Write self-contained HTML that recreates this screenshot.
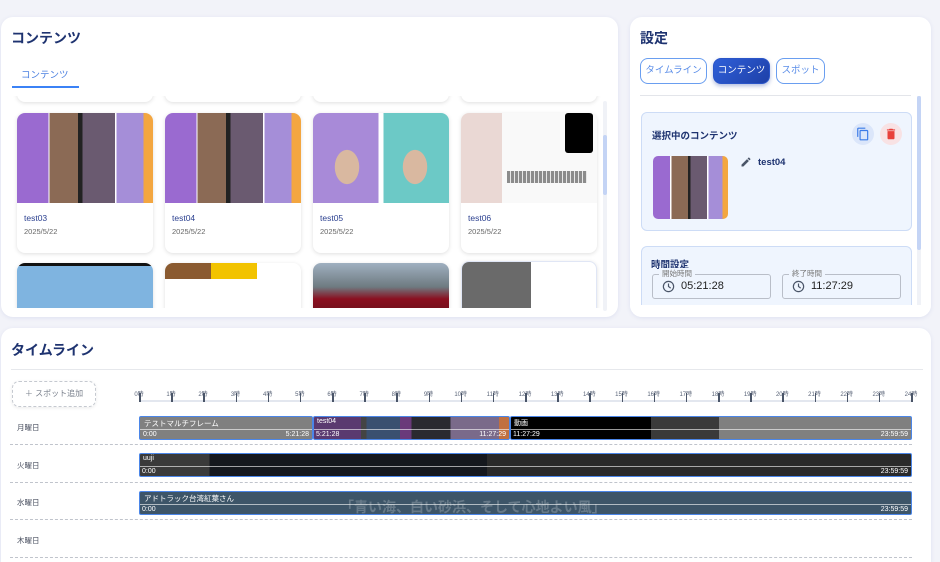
<!DOCTYPE html>
<html style="width:940px;height:562px;overflow:hidden"><head><meta charset="utf-8"><style>
*{margin:0;padding:0;box-sizing:border-box}
body{width:940px;height:562px;overflow:hidden;background:#f2f3f9;font-family:"Liberation Sans","Noto Sans CJK JP",sans-serif;position:relative}
.a{position:absolute}
.card{background:#fff;border-radius:12px;box-shadow:0 1px 4px rgba(80,100,180,.12)}
.h{color:#1e3370;font-weight:bold;font-size:14px}
.cc{position:absolute;width:136px;background:#fff;border-radius:8px;box-shadow:0 1px 4px rgba(0,0,0,.13);overflow:hidden}
.cc .img{position:absolute;left:0;top:0;width:136px;height:90px}
.cc .t{position:absolute;left:7px;top:100px;font-size:8.5px;color:#2a3f8f}
.cc .d{position:absolute;left:7px;top:114px;font-size:7.5px;color:#666}
.tab{position:absolute;top:41px;height:26px;border:1.5px solid #6a9ef0;border-radius:8px;color:#5a8de8;font-size:9.5px;line-height:23px;text-align:center}
.tk{position:absolute;top:389px;font-size:6px;color:#5a6478;width:20px;margin-left:-10px;text-align:center}
.tkl{position:absolute;top:393px;width:1.5px;height:9px;background:#4a5568}
.day{position:absolute;left:17px;font-size:7.5px;color:#4a5060}
.sep{position:absolute;left:10px;width:902px;border-top:1px dashed #c0c4cc}
.bar{position:absolute;left:139px;width:773px;height:24px;border:1px solid #4b86e8;border-radius:2px;overflow:hidden}
.lb{position:absolute;font-size:7px;color:#fff;white-space:nowrap}
.ml{position:absolute;left:0;right:0;top:12px;height:1px;background:rgba(255,255,255,.6)}
.inp{position:absolute;top:274px;width:119px;height:25px;border:1px solid #b9bec8;border-radius:3px;font-size:11px;color:#222}
.inp span.lg{position:absolute;top:-7px;left:6px;background:#eff5fe;padding:0 3px;font-size:7.5px;color:#777}
</style></head><body>

<!-- Contents card -->
<div class="a card" style="left:1px;top:17px;width:617px;height:300px;overflow:hidden">
 <div class="a h" style="left:10px;top:11px">コンテンツ</div>
 <div class="a" style="left:20px;top:50px;font-size:9.5px;color:#4a7fe0">コンテンツ</div>
 <div class="a" style="left:11px;top:69px;width:67px;height:2px;background:#3b82f6"></div>
 <div class="a" style="left:0;top:79px;width:617px;height:212px;overflow:hidden">
  <div class="cc" style="left:16px;top:-10px;height:16px"></div>
  <div class="cc" style="left:164px;top:-10px;height:16px"></div>
  <div class="cc" style="left:312px;top:-10px;height:16px"></div>
  <div class="cc" style="left:460px;top:-10px;height:16px"></div>
  <div class="cc" style="left:16px;top:17px;height:140px">
   <div class="img" style="background:linear-gradient(90deg,#9a6ad0 0 23%,#fff 23% 24%,#8b6a55 24% 45%,#222 45% 48%,#6a5a70 48% 72%,#fff 72% 73%,#a58ed8 73% 93%,#f3a640 93%)"></div>
   <div class="t">test03</div><div class="d">2025/5/22</div></div>
  <div class="cc" style="left:164px;top:17px;height:140px">
   <div class="img" style="background:linear-gradient(90deg,#9a6ad0 0 23%,#fff 23% 24%,#8b6a55 24% 45%,#222 45% 48%,#6a5a70 48% 72%,#fff 72% 73%,#a58ed8 73% 93%,#f3a640 93%)"></div>
   <div class="t">test04</div><div class="d">2025/5/22</div></div>
  <div class="cc" style="left:312px;top:17px;height:140px">
   <div class="img" style="background:radial-gradient(ellipse 20px 28px at 25% 60%,#d9b8a0 60%,transparent 62%),radial-gradient(ellipse 20px 28px at 75% 60%,#d9b8a0 60%,transparent 62%),linear-gradient(90deg,#a88ad8 0 48%,#fff 48% 52%,#6cc9c6 52%)"></div>
   <div class="t">test05</div><div class="d">2025/5/22</div></div>
  <div class="cc" style="left:460px;top:17px;height:140px">
   <div class="img" style="background:linear-gradient(90deg,#ead8d4 0 30%,#f9f9f9 30%)"></div>
   <div class="a" style="left:104px;top:0;width:28px;height:40px;background:#000;border-radius:3px"></div>
   <div class="a" style="left:46px;top:58px;width:80px;height:12px;background:repeating-linear-gradient(90deg,#444 0 3px,#ddd 3px 4px);opacity:.6"></div>
   <div class="t">test06</div><div class="d">2025/5/22</div></div>
  <div class="cc" style="left:16px;top:167px;height:60px;background:linear-gradient(#111 0 3px,#7fb4e0 3px)"></div>
  <div class="cc" style="left:164px;top:167px;height:60px"><div class="a" style="left:0;top:0;width:46px;height:16px;background:#8a5a30"></div><div class="a" style="left:46px;top:0;width:46px;height:16px;background:#f2c300"></div></div>
  <div class="cc" style="left:312px;top:167px;height:60px;background:linear-gradient(#9fb0c0,#6e7a80 40%,#8a1020 60%,#5a1018)"></div>
  <div class="cc" style="left:460px;top:165px;height:60px;border:1px solid #e0e6f5"><div class="a" style="left:0;top:0;width:69px;height:60px;background:#6a6a6a"></div></div>
 </div>
 <div class="a" style="left:602px;top:84px;width:4px;height:210px;background:#f0f2f7;border-radius:2px"></div>
 <div class="a" style="left:602px;top:118px;width:4px;height:60px;background:#c4d4f5;border-radius:2px"></div>
</div>

<!-- Settings card -->
<div class="a card" style="left:630px;top:17px;width:301px;height:300px;overflow:hidden">
 <div class="a h" style="left:10px;top:11px">設定</div>
 <div class="tab" style="left:10px;width:67px">タイムライン</div>
 <div class="tab" style="left:83px;width:57px;background:linear-gradient(135deg,#2f5fd8,#1e40a8);border-color:#2a55c8;color:#fff;box-shadow:0 2px 4px rgba(30,60,160,.35)">コンテンツ</div>
 <div class="tab" style="left:146px;width:49px">スポット</div>
 <div class="a" style="left:10px;top:78px;width:271px;height:1px;background:#e3e5ea"></div>
 <div class="a" style="left:287px;top:79px;width:4px;height:210px;background:#f0f2f7"></div>
 <div class="a" style="left:287px;top:79px;width:4px;height:154px;background:#c4d4f5;border-radius:2px"></div>
 <div class="a" style="left:11px;top:95px;width:271px;height:119px;background:#eff5fe;border:1px solid #cddcf6;border-radius:6px">
  <div class="a" style="left:10px;top:15px;font-size:9.5px;font-weight:bold;color:#1e3370">選択中のコンテンツ</div>
  <div class="a" style="left:210px;top:10px;width:22px;height:22px;border-radius:50%;background:#dbe6fa"></div>
  <svg class="a" style="left:214px;top:14px" width="14" height="14" viewBox="0 0 24 24"><path fill="#3b7be8" d="M16 1H4c-1.1 0-2 .9-2 2v14h2V3h12V1zm3 4H8c-1.1 0-2 .9-2 2v14c0 1.1.9 2 2 2h11c1.1 0 2-.9 2-2V7c0-1.1-.9-2-2-2zm0 16H8V7h11v14z"/></svg>
  <div class="a" style="left:238px;top:10px;width:22px;height:22px;border-radius:50%;background:#f8e2e4"></div>
  <svg class="a" style="left:242px;top:14px" width="14" height="14" viewBox="0 0 24 24"><path fill="#e8403a" d="M6 19c0 1.1.9 2 2 2h8c1.1 0 2-.9 2-2V7H6v12zM19 4h-3.5l-1-1h-5l-1 1H5v2h14V4z"/></svg>
  <div class="a" style="left:11px;top:43px;width:75px;height:63px;border-radius:5px;background:linear-gradient(90deg,#9a6ad0 0 23%,#fff 23% 25%,#8b6a55 25% 47%,#222 47% 50%,#6a5a70 50% 72%,#fff 72% 74%,#a58ed8 74% 93%,#f3a640 93%)"></div>
  <svg class="a" style="left:98px;top:43px" width="12" height="12" viewBox="0 0 24 24"><path fill="#4a5568" d="M3 17.25V21h3.75L17.81 9.94l-3.75-3.75L3 17.25zM20.71 7.04a1 1 0 000-1.41l-2.34-2.34a1 1 0 00-1.41 0l-1.83 1.83 3.75 3.75 1.83-1.83z"/></svg>
  <div class="a" style="left:116px;top:44px;font-size:9.5px;font-weight:bold;color:#1e3370">test04</div>
 </div>
 <div class="a" style="left:11px;top:229px;width:271px;height:80px;background:#eff5fe;border:1px solid #cddcf6;border-radius:6px"></div>
 <div class="a" style="left:21px;top:240px;font-size:9.5px;font-weight:bold;color:#1e3370">時間設定</div>
</div>
<div class="inp" style="left:652px"><span class="lg">開始時間</span>
 <svg class="a" style="left:9px;top:5px" width="13" height="13" viewBox="0 0 24 24"><circle cx="12" cy="12" r="9.5" fill="none" stroke="#4a5568" stroke-width="2.2"/><path d="M12 6.5V12l4 3" fill="none" stroke="#4a5568" stroke-width="2.2"/></svg>
 <span class="a" style="left:28px;top:5px">05:21:28</span></div>
<div class="inp" style="left:782px"><span class="lg">終了時間</span>
 <svg class="a" style="left:9px;top:5px" width="13" height="13" viewBox="0 0 24 24"><circle cx="12" cy="12" r="9.5" fill="none" stroke="#4a5568" stroke-width="2.2"/><path d="M12 6.5V12l4 3" fill="none" stroke="#4a5568" stroke-width="2.2"/></svg>
 <span class="a" style="left:28px;top:5px">11:27:29</span></div>
<div class="a" style="left:630px;top:305px;width:301px;height:12px;background:#fff;border-radius:0 0 12px 12px"></div>

<!-- Timeline card -->
<div class="a card" style="left:1px;top:328px;width:930px;height:234px;border-radius:12px 12px 0 0"></div>
<div class="a h" style="left:11px;top:340px">タイムライン</div>
<div class="a" style="left:11px;top:369px;width:912px;height:1px;background:#e6e8ec"></div>
<div class="a" style="left:12px;top:381px;width:84px;height:26px;border:1.5px dashed #c5c9d0;border-radius:7px;font-size:8px;color:#7a808c;line-height:23px;text-align:center;box-shadow:0 1px 3px rgba(0,0,0,.08)">＋ スポット追加</div>
<div class="a" style="left:139px;top:400px;width:774px;height:2px;background:#e3e7ef"></div>
<div class="tk" style="left:139px">0時</div><div class="tkl" style="left:139px"></div>
<div class="tk" style="left:171px">1時</div><div class="tkl" style="left:171px"></div>
<div class="tk" style="left:203px">2時</div><div class="tkl" style="left:203px"></div>
<div class="tk" style="left:235.5px">3時</div><div class="tkl" style="left:235.5px"></div>
<div class="tk" style="left:267.7px">4時</div><div class="tkl" style="left:267.7px"></div>
<div class="tk" style="left:299.8px">5時</div><div class="tkl" style="left:299.8px"></div>
<div class="tk" style="left:332px">6時</div><div class="tkl" style="left:332px"></div>
<div class="tk" style="left:364.2px">7時</div><div class="tkl" style="left:364.2px"></div>
<div class="tk" style="left:396.3px">8時</div><div class="tkl" style="left:396.3px"></div>
<div class="tk" style="left:428.5px">9時</div><div class="tkl" style="left:428.5px"></div>
<div class="tk" style="left:460.7px">10時</div><div class="tkl" style="left:460.7px"></div>
<div class="tk" style="left:492.8px">11時</div><div class="tkl" style="left:492.8px"></div>
<div class="tk" style="left:525px">12時</div><div class="tkl" style="left:525px"></div>
<div class="tk" style="left:557.2px">13時</div><div class="tkl" style="left:557.2px"></div>
<div class="tk" style="left:589.3px">14時</div><div class="tkl" style="left:589.3px"></div>
<div class="tk" style="left:621.5px">15時</div><div class="tkl" style="left:621.5px"></div>
<div class="tk" style="left:653.7px">16時</div><div class="tkl" style="left:653.7px"></div>
<div class="tk" style="left:685.8px">17時</div><div class="tkl" style="left:685.8px"></div>
<div class="tk" style="left:718px">18時</div><div class="tkl" style="left:718px"></div>
<div class="tk" style="left:750.2px">19時</div><div class="tkl" style="left:750.2px"></div>
<div class="tk" style="left:782.3px">20時</div><div class="tkl" style="left:782.3px"></div>
<div class="tk" style="left:814.5px">21時</div><div class="tkl" style="left:814.5px"></div>
<div class="tk" style="left:846.7px">22時</div><div class="tkl" style="left:846.7px"></div>
<div class="tk" style="left:878.8px">23時</div><div class="tkl" style="left:878.8px"></div>
<div class="tk" style="left:911px">24時</div><div class="tkl" style="left:911px"></div>

<div class="day" style="top:422px">月曜日</div>
<div class="day" style="top:460px">火曜日</div>
<div class="day" style="top:497px">水曜日</div>
<div class="day" style="top:535px">木曜日</div>
<div class="sep" style="top:444px"></div>
<div class="sep" style="top:482px"></div>
<div class="sep" style="top:519px"></div>
<div class="sep" style="top:557px"></div>

<div class="a" style="left:139px;top:416px;width:174px;height:24px;background:#808080;border:1px solid #4b86e8;border-radius:2px">
 <div class="ml"></div><div class="lb" style="left:4px;top:1px;font-size:7.5px">テストマルチフレーム</div>
 <div class="lb" style="left:3px;top:14px">0:00</div><div class="lb" style="right:3px;top:14px">5:21:28</div></div>
<div class="a" style="left:313px;top:416px;width:197px;height:24px;border:1px solid #4b86e8;border-radius:2px;background:linear-gradient(90deg,#5a3a70 0 24%,#444 24% 27%,#3a5070 27% 44%,#6a3a7a 44% 50%,#2a2a30 50% 70%,#7a6a8a 70% 95%,#c07040 95%)">
 <div class="ml"></div><div class="lb" style="left:3px;top:1px">test04</div>
 <div class="lb" style="left:2px;top:14px">5:21:28</div><div class="lb" style="right:3px;top:14px">11:27:29</div></div>
<div class="a" style="left:510px;top:416px;width:402px;height:24px;border:1px solid #4b86e8;border-radius:2px;background:linear-gradient(90deg,#000 0 35%,#3a3a3a 35% 52%,#808080 52%)">
 <div class="ml"></div><div class="lb" style="left:3px;top:1px">動画</div>
 <div class="lb" style="left:2px;top:14px">11:27:29</div><div class="lb" style="right:3px;top:14px">23:59:59</div></div>
<div class="bar" style="top:453px;background:linear-gradient(90deg,#3a3a3a 0 9%,#15181e 9% 45%,#2a2a2a 45%)">
 <div class="ml"></div><div class="lb" style="left:3px;top:1px">uuji</div>
 <div class="lb" style="left:2px;top:14px">0:00</div><div class="lb" style="right:3px;top:14px">23:59:59</div></div>
<div class="bar" style="top:491px;background:#3d5568">
 <div class="ml"></div><div class="lb" style="left:4px;top:1px;font-size:7.5px">アドトラック台湾紅葉さん</div>
 <div class="lb" style="left:200px;top:5px;font-size:14px;font-weight:bold;color:rgba(255,255,255,.22)">「青い海、白い砂浜、そして心地よい風」</div>
 <div class="lb" style="left:2px;top:14px">0:00</div><div class="lb" style="right:3px;top:14px">23:59:59</div></div>
</body></html>
